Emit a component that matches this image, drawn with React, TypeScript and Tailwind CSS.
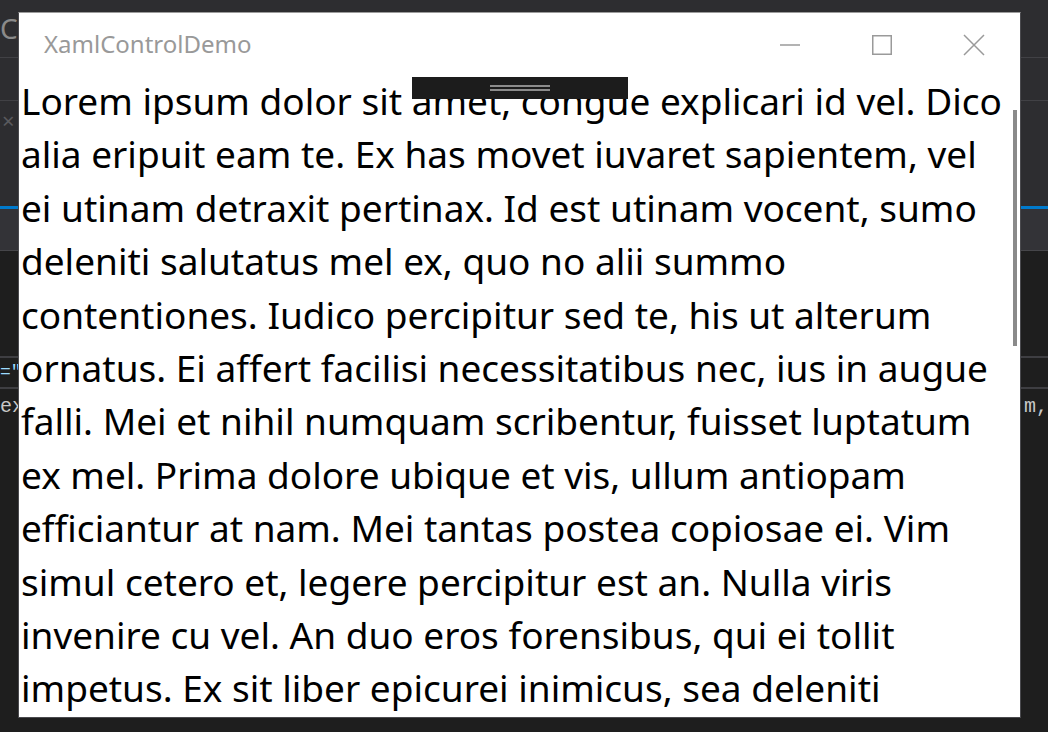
const lines = [
  "Lorem ipsum dolor sit amet, congue explicari id vel. Dico",
  "alia eripuit eam te. Ex has movet iuvaret sapientem, vel",
  "ei utinam detraxit pertinax. Id est utinam vocent, sumo",
  "deleniti salutatus mel ex, quo no alii summo",
  "contentiones. Iudico percipitur sed te, his ut alterum",
  "ornatus. Ei affert facilisi necessitatibus nec, ius in augue",
  "falli. Mei et nihil numquam scribentur, fuisset luptatum",
  "ex mel. Prima dolore ubique et vis, ullum antiopam",
  "efficiantur at nam. Mei tantas postea copiosae ei. Vim",
  "simul cetero et, legere percipitur est an. Nulla viris",
  "invenire cu vel. An duo eros forensibus, qui ei tollit",
  "impetus. Ex sit liber epicurei inimicus, sea deleniti",
];

const Backdrop = () => {
  return (
    <div className="flex flex-col w-full h-full">
      <div className="h-[57px] bg-[#2d2d30] text-[#8a8a8a] text-[28px] leading-none pt-[14px] font-['Noto_Sans',sans-serif]">C</div>
      <div className="h-px bg-[#414145]" />
      <div className="h-[42px] bg-[#2d2d30]" />
      <div className="h-px bg-[#414145]" />
      <div className="h-[105px] bg-[#2d2d30] text-[#5a5a5e] text-[22px] pl-[2px] pt-[8px] leading-none">×</div>
      <div className="h-[3px] bg-[#007acc]" />
      <div className="h-[41px] bg-[#333337]" />
      <div className="h-px bg-[#46464a]" />
      <div className="h-[105px] bg-[#1e1e1e]" />
      <div className="h-[2px] bg-[#3e3e42]" />
      <div className="h-[29px] bg-[#1e1e1e] text-[#9cdcfe] text-[18px] leading-[29px] font-['Liberation_Mono',monospace]">="</div>
      <div className="h-[2px] bg-[#3e3e42]" />
      <div className="flex-1 bg-[#1e1e1e] text-[#c8c8c8] text-[20px] leading-[36px] font-['Liberation_Mono',monospace]">
        <div className="flex justify-between">
          <span>ex</span>
          <span>m,</span>
        </div>
      </div>
    </div>
  );
};

const Window = () => {
  return (
    <div className="absolute left-[18px] top-[12px] w-[1003px] h-[706px] bg-white border border-[#4a4a4e] border-t-[#9c9c9c] flex flex-col overflow-hidden">
      <div className="h-[63px] flex items-center shrink-0">
        <div className="pl-[25px] flex-1 text-[24px] text-[#999999] font-['Noto_Sans',sans-serif] -mt-[2px]">
          XamlControlDemo
        </div>
        <div className="w-[92px] h-full flex items-center justify-center">
          <svg width="22" height="22" viewBox="0 0 22 22">
            <line x1="1" y1="11" x2="21" y2="11" stroke="#9a9a9a" strokeWidth="1.5" />
          </svg>
        </div>
        <div className="w-[92px] h-full flex items-center justify-center">
          <svg width="22" height="22" viewBox="0 0 22 22">
            <rect x="1.75" y="1.75" width="18.5" height="18.5" fill="none" stroke="#9a9a9a" strokeWidth="1.5" />
          </svg>
        </div>
        <div className="w-[92px] h-full flex items-center justify-center">
          <svg width="22" height="22" viewBox="0 0 22 22">
            <path d="M1 1 L21 21 M21 1 L1 21" stroke="#9a9a9a" strokeWidth="1.5" />
          </svg>
        </div>
      </div>
      <div className="relative flex-1 overflow-hidden">
        <div className="pl-[2px] text-black text-[37px] leading-[53.4px] font-['Noto_Sans',sans-serif] -mt-[2px]">
          {lines.map((l, i) => (
            <div key={i} className="whitespace-nowrap">
              {l}
            </div>
          ))}
        </div>
        <div className="absolute left-[393px] top-[1px] w-[216px] h-[22px] bg-[#1c1c1c] flex flex-col items-center justify-center gap-[2px]">
          <div className="w-[60px] h-[2px] bg-[#8c8c8c]" />
          <div className="w-[60px] h-[2px] bg-[#8c8c8c]" />
        </div>
        <div className="absolute right-[3px] top-[34px] w-[4px] h-[236px] bg-[#8a8a8a]" />
      </div>
    </div>
  );
};

export default function App() {
  return (
    <div className="relative w-[1048px] h-[732px] overflow-hidden bg-[#1e1e1e]">
      <Backdrop />
      <Window />
    </div>
  );
}
